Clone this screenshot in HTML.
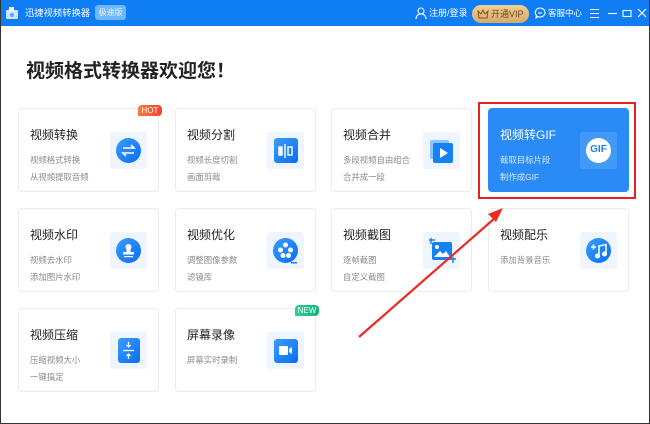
<!DOCTYPE html>
<html><head><meta charset="utf-8"><style>
*{margin:0;padding:0;box-sizing:border-box}
body{width:650px;height:424px;overflow:hidden;background:#fff;font-family:"Liberation Sans","Noto Sans CJK SC",sans-serif;position:relative}
.frame{position:absolute;left:0;top:0;width:650px;height:424px;border-left:1px solid #333;border-right:1px solid #333;border-bottom:1px solid #333}
.bar{position:absolute;left:0;top:0;width:650px;height:26px;background:#0f7ef5;color:#fff}
.bar span{position:absolute;font-size:9px;line-height:26px;white-space:nowrap}
h1{position:absolute;left:26px;top:56px;font-size:19px;font-weight:bold;color:#222}
.card{position:absolute;width:141px;height:84px;border:1px solid #e8ebef;border-radius:4px;background:#fff}
.card .t{position:absolute;left:11px;top:17px;font-size:12px;color:#222;white-space:nowrap}
.card .d{position:absolute;left:11px;font-size:8.4px;color:#8a8a8a;white-space:nowrap}
.card .ib{position:absolute;left:91px;top:23px;width:37px;height:37px;background:#eef5ff;border-radius:3px}
.ib .c{position:absolute;left:6px;top:6px;width:25px;height:25px;border-radius:50%;background:linear-gradient(135deg,#3a9dff,#0a6ef0)}
.ib svg{position:absolute;left:0;top:0}
.hl{background:#2a8bf6;border-color:#2a8bf6}
.hl .t{color:#fff}.hl .d{color:#d6e8ff}
.hl .ib{background:rgba(255,255,255,0.12)}
.badge{position:absolute;font-size:8px;color:#fff;line-height:11px;text-align:center;border-radius:4px 4px 4px 0}
</style></head><body>
<div class="bar">
 <svg style="position:absolute;left:5px;top:6px" width="14" height="14"><rect x="1" y="4" width="12" height="9" rx="1.5" fill="#cfe6ff"/><rect x="4" y="1" width="5" height="4" fill="#fff"/><circle cx="7" cy="9" r="2" fill="#5aa5f5"/></svg>
 <span style="left:25px;font-size:9.3px">迅捷视频转换器</span>
 <span style="left:95px;top:5px;height:15px;width:31px;line-height:15px;font-size:8px;background:#6cb7ff;border-radius:3px;text-align:center;color:#eaf5ff">极速版</span>
 <svg style="position:absolute;left:415px;top:7px" width="12" height="12" fill="none" stroke="#fff" stroke-width="1.1"><circle cx="6" cy="4" r="3"/><path d="M1 12c0-3 2-5 5-5s5 2 5 5"/></svg>
 <span style="left:429px">注册/登录</span>
 <span style="left:472px;top:5px;width:57px;height:18px;line-height:18px;background:linear-gradient(#f3cf95,#d9a86a);border-radius:9px;color:#6a4a1c;padding-left:19px;font-size:9px">开通VIP</span>
 <svg style="position:absolute;left:477px;top:9px" width="12" height="10" fill="none" stroke="#7a5520" stroke-width="1"><path d="M1 2l3 3 2-4 2 4 3-3-1 7H2z"/></svg>
 <svg style="position:absolute;left:534px;top:7px" width="12" height="12" fill="none" stroke="#fff" stroke-width="1.1"><path d="M6 1a5 4.5 0 1 1-2 8.6L2 11l.5-2.6A5 4.5 0 0 1 6 1z"/><path d="M4 6h4"/></svg>
 <span style="left:548px;font-size:8.5px">客服中心</span>
 <svg style="position:absolute;left:589px;top:8px" width="60" height="11" stroke="#fff" stroke-width="1.1" fill="none"><path d="M1 1.5h9M1 5.5h9M1 9.5h9"/><path d="M19 5.5h9"/><rect x="34" y="2.5" width="8" height="6"/><path d="M49 1l8 8M57 1l-8 8"/></svg>
</div>
<h1>视频格式转换器欢迎您！</h1>

<div class="card" style="left:18px;top:108px"><div class="t">视频转换</div><div class="d" style="top:45px">视频格式转换</div><div class="d" style="top:62px">从视频提取音频</div><div class="ib"><div class="c"></div><svg width="37" height="37" fill="none" stroke="#fff" stroke-width="1.6"><path d="M13 16h11l-3-3M24 21H13l3 3"/></svg></div></div>
<div class="badge" style="left:138px;top:105px;width:24px;background:linear-gradient(90deg,#ff7a3c,#f0432a)">HOT</div>

<div class="card" style="left:175px;top:108px"><div class="t">视频分割</div><div class="d" style="top:45px">视频长度切割</div><div class="d" style="top:62px">画面剪裁</div><div class="ib"><div style="position:absolute;left:7px;top:6px;width:24px;height:25px;border-radius:3px;background:linear-gradient(135deg,#3a9dff,#0a6ef0)"></div><svg width="37" height="37" fill="none" stroke="#fff" stroke-width="1.4"><rect x="12" y="15" width="3" height="8" fill="#fff"/><path d="M18 12v14"/><rect x="21" y="15" width="4" height="8"/></svg></div></div>

<div class="card" style="left:331px;top:108px"><div class="t">视频合并</div><div class="d" style="top:45px">多段视频自由组合</div><div class="d" style="top:62px">合并成一段</div><div class="ib"><svg width="37" height="37"><rect x="7" y="8" width="19" height="19" rx="2" fill="#8cc4ff"/><rect x="10" y="11" width="20" height="20" rx="2" fill="#1680f5"/><path d="M17 16v10l8-5z" fill="#fff"/></svg></div></div>

<div class="card hl" style="left:488px;top:108px"><div class="t">视频转GIF</div><div class="d" style="top:45px">截取目标片段</div><div class="d" style="top:62px">制作成GIF</div><div class="ib"><div class="c" style="background:#fff;left:6px;top:6px"></div><div style="position:absolute;left:0;top:12px;width:37px;text-align:center;font-size:10px;font-weight:bold;color:#1a7ff2">GIF</div></div></div>
<div style="position:absolute;left:478px;top:102px;width:158px;height:97px;border:2px solid #e8201e"></div>

<div class="card" style="left:18px;top:208px"><div class="t">视频水印</div><div class="d" style="top:45px">视频去水印</div><div class="d" style="top:62px">添加图片水印</div><div class="ib"><div class="c"></div><svg width="37" height="37" fill="#fff"><circle cx="18.5" cy="15" r="3"/><rect x="16.5" y="17" width="4" height="3"/><rect x="13" y="20" width="11" height="2.5"/><rect x="14" y="24" width="9" height="1.2"/></svg></div></div>

<div class="card" style="left:175px;top:208px"><div class="t">视频优化</div><div class="d" style="top:45px">调整图像参数</div><div class="d" style="top:62px">滤镜库</div><div class="ib"><div class="c"></div><svg width="37" height="37" fill="#fff"><circle cx="18.5" cy="13" r="2.5"/><circle cx="13.5" cy="18" r="2.5"/><circle cx="23.5" cy="18" r="2.5"/><circle cx="16" cy="23.5" r="2.5"/><circle cx="21.5" cy="23.5" r="2.5"/><path d="M24 30h6v1.5h-6z" fill="#1680f5"/></svg></div></div>

<div class="card" style="left:331px;top:208px"><div class="t">视频截图</div><div class="d" style="top:45px">逐帧截图</div><div class="d" style="top:62px">自定义截图</div><div class="ib"><svg width="37" height="37"><rect x="9" y="10" width="20" height="18" rx="2" fill="#1680f5"/><path d="M6 8h6M8 6v6M27 27h6M30 25v6" stroke="#1680f5" stroke-width="1.5"/><circle cx="14" cy="15" r="2" fill="#fff"/><path d="M11 25l6-6 3 3 3-3 4 6z" fill="#fff"/></svg></div></div>

<div class="card" style="left:488px;top:208px"><div class="t">视频配乐</div><div class="d" style="top:45px">添加背景音乐</div><div class="ib"><div class="c"></div><svg width="37" height="37" fill="none" stroke="#fff" stroke-width="1.5"><path d="M11 15h5M13.5 12.5v5"/><path d="M19 24V14l7-1.5V22"/><circle cx="17.5" cy="24" r="1.8" fill="#fff"/><circle cx="24.5" cy="22" r="1.8" fill="#fff"/></svg></div></div>

<div class="card" style="left:18px;top:308px"><div class="t">视频压缩</div><div class="d" style="top:45px">压缩视频大小</div><div class="d" style="top:62px">一键搞定</div><div class="ib"><div style="position:absolute;left:8px;top:6px;width:22px;height:25px;border-radius:3px;background:linear-gradient(135deg,#3a9dff,#0a6ef0)"></div><svg width="37" height="37" fill="none" stroke="#fff" stroke-width="1.3"><path d="M13 18.5h11"/><path d="M18.5 10v5M16.5 13l2 2 2-2M18.5 27v-5M16.5 24l2-2 2 2"/></svg></div></div>

<div class="card" style="left:175px;top:308px"><div class="t">屏幕录像</div><div class="d" style="top:45px">屏幕实时录制</div><div class="ib"><div style="position:absolute;left:7px;top:7px;width:24px;height:24px;border-radius:3px;background:linear-gradient(135deg,#3a9dff,#0a6ef0)"></div><svg width="37" height="37" fill="#fff"><rect x="12" y="14" width="9" height="9" rx="1"/><path d="M22 17l3-2v7l-3-2z"/></svg></div></div>
<div class="badge" style="left:295px;top:305px;width:24px;background:linear-gradient(90deg,#2bd19a,#13b07a)">NEW</div>

<svg style="position:absolute;left:0;top:0" width="650" height="424"><path d="M359 337L495 218" stroke="#ee2a22" stroke-width="2.2"/><path d="M503 208l-15 6 8 8z" fill="#ee2a22"/></svg>
<div class="frame"></div>
</body></html>
